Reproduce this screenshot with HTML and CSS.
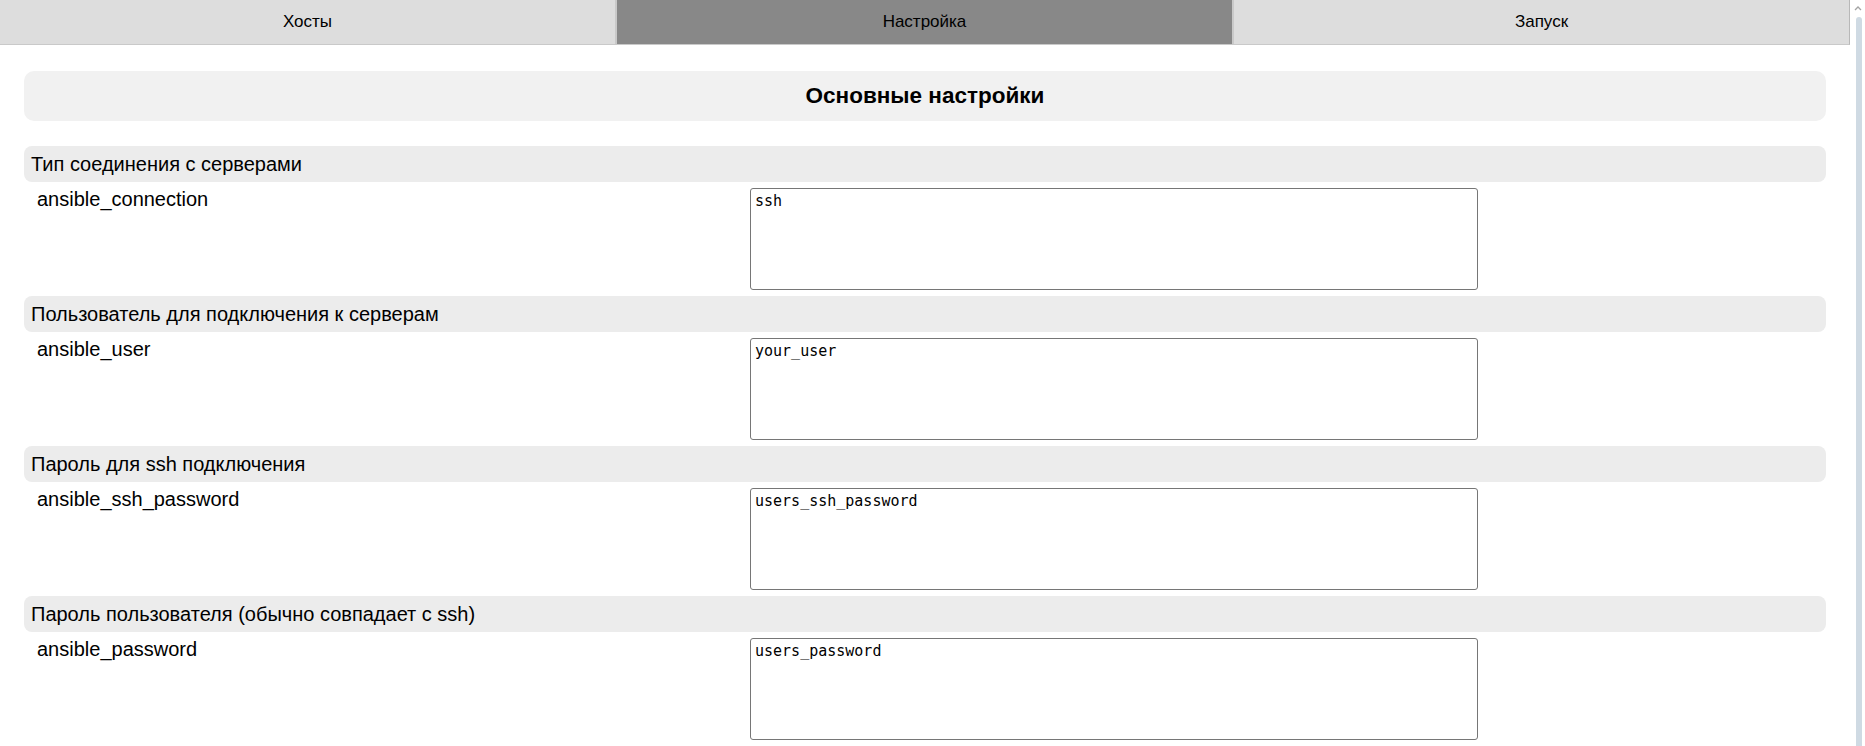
FILE: index.html
```html
<!DOCTYPE html>
<html lang="ru">
<head>
<meta charset="utf-8">
<title>Настройка</title>
<link rel="stylesheet" href="styles.css">
</head>
<body>
<div class="page">
  <div class="app">
    <nav class="tabs">
      <button class="tab">Хосты</button>
      <button class="tab tab-active">Настройка</button>
      <button class="tab">Запуск</button>
    </nav>
    <main class="content">
      <div class="title-box"><h2 class="title">Основные настройки</h2></div>

      <section class="group">
        <div class="group-head">Тип соединения с серверами</div>
        <div class="row">
          <div class="label">ansible_connection</div>
          <textarea class="value">ssh</textarea>
        </div>
      </section>

      <section class="group">
        <div class="group-head">Пользователь для подключения к серверам</div>
        <div class="row">
          <div class="label">ansible_user</div>
          <textarea class="value">your_user</textarea>
        </div>
      </section>

      <section class="group">
        <div class="group-head">Пароль для ssh подключения</div>
        <div class="row">
          <div class="label">ansible_ssh_password</div>
          <textarea class="value">users_ssh_password</textarea>
        </div>
      </section>

      <section class="group">
        <div class="group-head">Пароль пользователя (обычно совпадает с ssh)</div>
        <div class="row">
          <div class="label">ansible_password</div>
          <textarea class="value">users_password</textarea>
        </div>
      </section>
    </main>
  </div>
  <div class="scrollbar" aria-hidden="true">
    <svg class="scroll-arrow" width="15" height="17" viewBox="0 0 15 17">
      <path d="M5 10 L8 7 L11 10" fill="none" stroke="#a3a3a3" stroke-width="1.3"/>
    </svg>
    <div class="scroll-thumb"></div>
  </div>
</div>
</body>
</html>
```

FILE: styles.css
```css
body {
  margin: 0;
  font-family: "Liberation Sans", Arial, sans-serif;
  color: #000;
  background: #fff;
  overflow: hidden;
}

.page {
  display: flex;
  height: 746px;
}
.app {
  flex: 1;
  min-width: 0;
}

.scrollbar {
  width: 15px;
  flex: none;
  display: flex;
  flex-direction: column;
  background: #ffffff;
}
.scroll-arrow {
  display: block;
  flex: none;
}
.scroll-thumb {
  flex: 1;
  margin: 0 3px 0 6px;
  background: #cfdae3;
  border-radius: 3px 3px 0 0;
}

.tabs {
  display: flex;
  height: 45px;
}
.tab {
  flex: 1;
  margin: 0;
  padding: 0;
  font-family: "Liberation Sans", Arial, sans-serif;
  font-size: 17px;
  color: #000;
  background: #dddddd;
  border: 0;
  border-left: 1px solid #c9c9c9;
  border-right: 1px solid #c9c9c9;
  border-bottom: 1px solid #c9c9c9;
}
.tab:first-child {
  border-left: 0;
}
.tab:last-child {
  border-right-color: #b8b8b8;
}
.tab-active {
  background: #888888;
}

.content {
  padding: 26px 24px 10px;
}

.title-box {
  height: 50px;
  background: #f1f1f1;
  border-radius: 10px;
  display: flex;
  align-items: center;
  justify-content: center;
  margin-bottom: 25px;
}
.title {
  margin: 0;
  font-size: 22.5px;
  font-weight: bold;
}

.group-head {
  height: 36px;
  display: flex;
  align-items: center;
  padding-left: 7px;
  background: #ececec;
  border-radius: 8px;
  font-size: 20px;
}

.row {
  display: grid;
  grid-template-columns: 726px 728px;
  margin: 6px 0;
}
.label {
  padding-left: 13px;
  font-size: 20px;
  line-height: 23px;
}
.value {
  box-sizing: border-box;
  width: 728px;
  height: 102px;
  margin: 0;
  padding: 3px 4px;
  border: 1px solid #767676;
  border-radius: 3px;
  font-family: "DejaVu Sans Mono", "Liberation Mono", monospace;
  font-size: 15px;
  line-height: 18px;
  color: #000;
  resize: none;
  background: #fff;
}
```
